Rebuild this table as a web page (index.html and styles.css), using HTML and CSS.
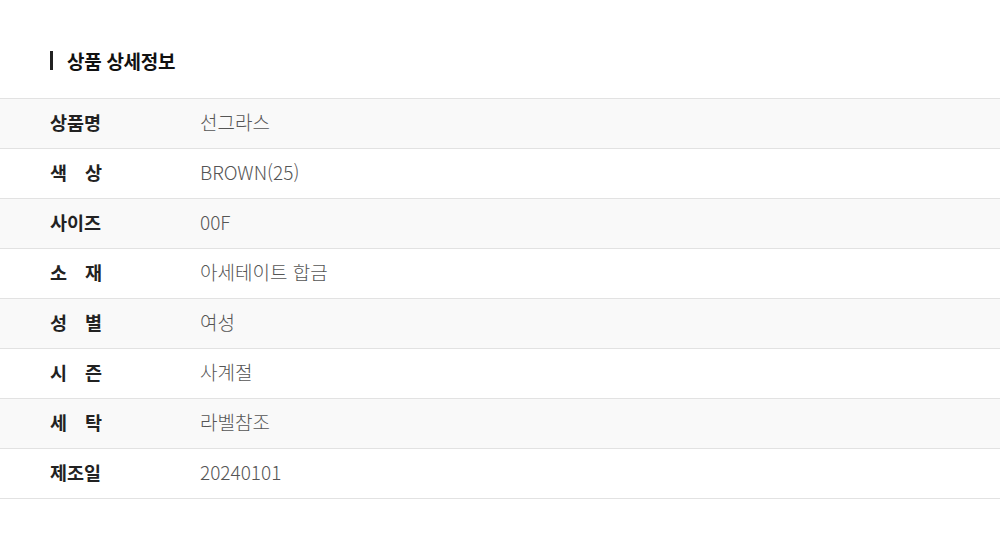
FILE: index.html
```html
<!DOCTYPE html>
<html lang="ko">
<head>
    <meta charset="UTF-8">
    <meta name="viewport" content="width=device-width, initial-scale=1.0">
    <title>상품 상세정보</title>
    <link rel="stylesheet" href="styles.css">
</head>
<body>
    <div class="detail-section">
        <h2 class="detail-title">상품 상세정보</h2>

        <table class="detail-table">
            <tr>
                <th><span class="label">상품명</span></th>
                <td>선그라스</td>
            </tr>
            <tr>
                <th><span class="label">색 상</span></th>
                <td>BROWN(25)</td>
            </tr>
            <tr>
                <th><span class="label">사이즈</span></th>
                <td>00F</td>
            </tr>
            <tr>
                <th><span class="label">소 재</span></th>
                <td>아세테이트 합금</td>
            </tr>
            <tr>
                <th><span class="label">성 별</span></th>
                <td>여성</td>
            </tr>
            <tr>
                <th><span class="label">시 즌</span></th>
                <td>사계절</td>
            </tr>
            <tr>
                <th><span class="label">세 탁</span></th>
                <td>라벨참조</td>
            </tr>
            <tr>
                <th><span class="label">제조일</span></th>
                <td>20240101</td>
            </tr>
        </table>
    </div>
</body>
</html>
```

FILE: styles.css
```css
* {
    margin: 0;
    padding: 0;
    box-sizing: border-box;
}

body {
    background: #fff;
    font-family: 'Noto Sans CJK KR', 'Noto Sans', sans-serif;
    color: #222;
}

.detail-section {
    padding-top: 46px;
}

.detail-title {
    display: flex;
    align-items: center;
    margin-left: 50px;
    height: 28px;
    font-size: 19px;
    font-weight: bold;
    letter-spacing: -0.3px;
    color: #111;
}

.detail-title::before {
    content: '';
    display: block;
    width: 3px;
    height: 19px;
    background: #222;
    margin-right: 14px;
}

.detail-table {
    width: 100%;
    margin-top: 24px;
    border-collapse: collapse;
    border-top: 1px solid #e2e2e2;
}

.detail-table tr {
    height: 50px;
    border-bottom: 1px solid #e2e2e2;
}

.detail-table tr:nth-child(odd) {
    background: #f9f9f9;
}

.detail-table th,
.detail-table td {
    padding-bottom: 4px;
}

.detail-table th {
    width: 200px;
    padding-left: 50px;
    text-align: left;
    font-size: 18.5px;
    font-weight: bold;
    color: #222;
}

.label {
    display: inline-block;
    width: 52px;
    text-align: justify;
    text-align-last: justify;
}

.detail-table td {
    font-size: 19px;
    font-weight: 300;
    color: #555;
}
```
